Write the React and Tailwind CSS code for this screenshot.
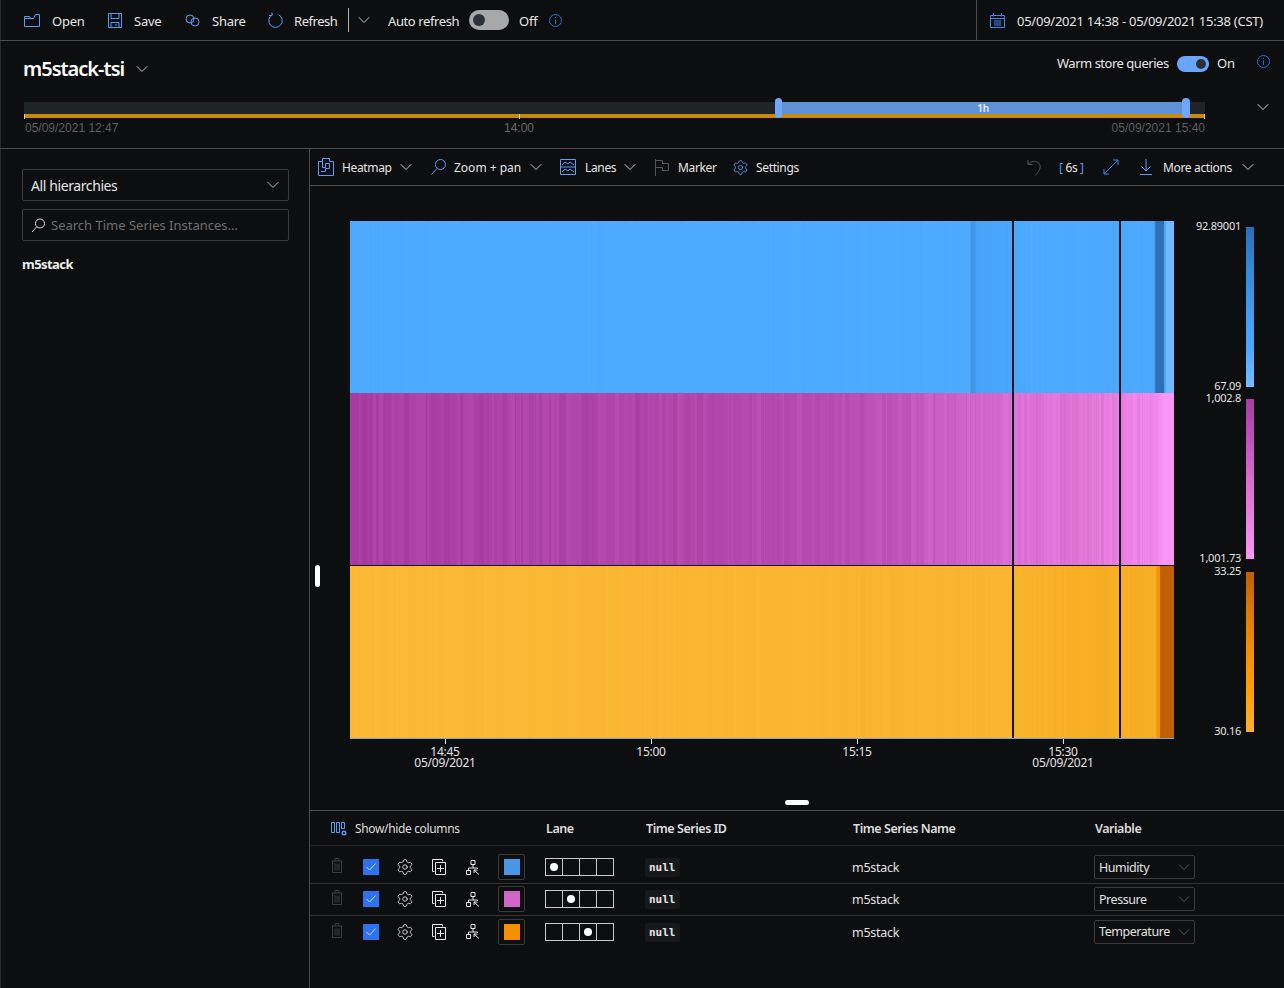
import React from 'react';
import { ChevronDown, Settings } from 'lucide-react';

// Colores usados en los iconos
const BLUE = '#5a9cf8';

function seeded(seed) {
  let s = seed;
  return () => {
    s = (s * 16807) % 2147483647;
    return s / 2147483647;
  };
}

function hexToRgb(h) {
  return [parseInt(h.slice(1, 3), 16), parseInt(h.slice(3, 5), 16), parseInt(h.slice(5, 7), 16)];
}

function colorAt(stops, x) {
  let i = 0;
  while (i < stops.length - 2 && x > stops[i + 1][0]) i++;
  const [x0, c0] = stops[i];
  const [x1, c1] = stops[i + 1];
  const t = Math.min(1, Math.max(0, (x - x0) / (x1 - x0)));
  const a = hexToRgb(c0);
  const b = hexToRgb(c1);
  return a.map((v, k) => v + (b[k] - v) * t);
}

function buildStripes(stops, noise, seed) {
  const rnd = seeded(seed);
  const out = [];
  let x = 350;
  while (x < 1174) {
    // cerca del final hay bandas finas, no se pueden tapar con franjas anchas
    const w = x >= 1140 || (x >= 965 && x < 980) ? 1 : x >= 965 ? 1 + Math.floor(rnd() * 3) : 1 + Math.floor(rnd() * 5);
    const n = (rnd() - 0.5) * noise;
    const fade = x > 1150 ? 0 : 1;
    const c = colorAt(stops, x + w / 2).map((v) => Math.round(Math.min(255, Math.max(0, v + n * fade))));
    out.push({ x, w, fill: `rgb(${c[0]},${c[1]},${c[2]})` });
    x += w;
  }
  return out;
}

const LANES = [
  {
    y: 221,
    h: 172,
    stripes: buildStripes(
      [
        [350, '#4daaff'], [970, '#4daaff'], [971, '#3f97e6'], [975, '#3f97e6'], [976, '#47a3f6'], [1000, '#49a6fa'],
        [1030, '#4daaff'], [1154, '#4ba8fc'], [1156, '#2b70b9'], [1163.9, '#2b70b9'], [1164, '#4aa8ff'],
        [1165.9, '#4aa8ff'], [1166, '#70b9ff'], [1174, '#70b9ff'],
      ],
      2,
      11
    ),
  },
  {
    y: 393,
    h: 172,
    stripes: buildStripes(
      [
        [350, '#a93fa3'], [700, '#b148aa'], [860, '#bb50b4'], [960, '#cc62c6'], [1010, '#d86dd2'], [1100, '#e27ad9'],
        [1122, '#e87ee2'], [1155, '#ef86ea'], [1164, '#fb95f8'], [1174, '#fb95f8'],
      ],
      12,
      29
    ),
  },
  {
    y: 566,
    h: 172,
    stripes: buildStripes(
      [
        [350, '#fbb935'], [1000, '#fab42f'], [1090, '#f8ae24'], [1156, '#f8ae24'], [1157, '#f59300'], [1159.9, '#f59300'],
        [1160, '#c06000'], [1174, '#c06000'],
      ],
      3,
      53
    ),
  },
];

const LEGENDS = [
  {
    id: 'lg-blue', y: 227, top: '92.89001', bottom: '67.09', topY: 230, bottomY: 390,
    stops: ['#2a6eb8', '#3488d8', '#3d9aec', '#4aa8ff', '#74bcff'],
  },
  {
    id: 'lg-purple', y: 399, top: '1,002.8', bottom: '1,001.73', topY: 402, bottomY: 562,
    stops: ['#a83da3', '#c050ba', '#d86cd2', '#ec80e6', '#fb95f8'],
  },
  {
    id: 'lg-orange', y: 572, top: '33.25', bottom: '30.16', topY: 575, bottomY: 735,
    stops: ['#c06000', '#dc7a00', '#f58e00', '#ffa000', '#fbb030'],
  },
];

const TICKS = [
  { x: 445, time: '14:45', date: '05/09/2021' },
  { x: 651, time: '15:00' },
  { x: 857, time: '15:15' },
  { x: 1063, time: '15:30', date: '05/09/2021' },
];

const ROWS = [
  { lane: 0, color: 'bg-[#4a96e6]', variable: 'Humidity' },
  { lane: 1, color: 'bg-[#d066c8]', variable: 'Pressure' },
  { lane: 2, color: 'bg-[#f78e00]', variable: 'Temperature' },
];

const Icon = ({ children, w = 16, h = 16, stroke = BLUE }) => (
  <svg width={w} height={h} viewBox={`0 0 ${w} ${h}`} fill="none" stroke={stroke} strokeWidth="1" className="shrink-0">
    {children}
  </svg>
);

const Info = () => (
  <Icon w={13} h={13} stroke="#2a72d0">
    <circle cx="6.5" cy="6.5" r="6" />
    <path d="M6.5 5.5v4.500M6.5 3v1" />
  </Icon>
);

// El glifo ocupa la mitad de la caja de lucide, por eso la caja es mas estrecha que el icono
const Chevron = ({ className = 'text-[#d8d8d8]' }) => (
  <span className={`shrink-0 w-[10px] flex justify-center ${className}`}>
    <ChevronDown size={20} strokeWidth={1.1} className="shrink-0" />
  </span>
);

const Toggle = ({ on }) =>
  on ? (
    <div className="flex w-8 h-4 rounded-full bg-[#69a6fb] items-center justify-end pr-[3px]">
      <div className="w-2.5 h-2.5 rounded-full bg-[#2c3138]" />
    </div>
  ) : (
    <div className="flex w-10 h-5 rounded-full bg-[#a8a8a8] items-center pl-1">
      <div className="w-3 h-3 rounded-full bg-[#2c3138]" />
    </div>
  );

function TopBar() {
  return (
    <div className="flex h-[41px] border-b border-[#4c4c4c] items-center text-[13px] text-[#e6e6e6]">
      <div className="ml-[24px]">
        <Icon w={16} h={13}>
          <path d="M.5 4.500h9l2-4h4v12H.5zM.5 4.500v-2h5l1 2" />
        </Icon>
      </div>
      <span className="ml-[12px] w-[56px] pt-[3px]">Open</span>
      <Icon w={14} h={15}>
        <path d="M.5.5h13v14H.5zM3 .5v5h8v-5M3 14.500v-5h8v5M8 11v2" />
      </Icon>
      <span className="ml-[12px] w-[51px] pt-[3px]">Save</span>
      <Icon w={15} h={13}>
        <circle cx="5" cy="5" r="4" />
        <circle cx="10" cy="8" r="4" />
      </Icon>
      <span className="ml-[12px] w-[56px] pt-[3px]">Share</span>
      <Icon w={15} h={17}>
        <path d="M4.500 2.700a6.700 6.700 0 1 0 6 0M4 .5v3h-3" />
      </Icon>
      <span className="ml-[11px] w-[43px] pt-[3px] whitespace-nowrap tracking-[-0.45px]">Refresh</span>
      <div className="ml-[11px] w-px h-6 bg-[#b4b4b4]" />
      <Chevron className="ml-[10px] text-[#d8d8d8]" />
      <span className="ml-[19px] w-[71px] pt-[3px] whitespace-nowrap tracking-[-0.4px]">Auto refresh</span>
      <div className="ml-[10px]"><Toggle /></div>
      <span className="ml-[10px] w-[17px] pt-[3px]">Off</span>
      <div className="ml-[13px]"><Info /></div>
      <div className="ml-auto w-px h-full bg-[#4c4c4c]" />
      <div className="ml-[13px]">
        <Icon w={15} h={15} stroke="#3e86f0">
          <path d="M.5 2.500h14v12H.5zM.5 5.500h14M3.500.5v3M11.500.5v3M4 8h7M4 10h7M4 12h7" />
        </Icon>
      </div>
      <span className="ml-[12px] mr-[20px] w-[247px] pt-[3px] whitespace-nowrap">05/09/2021 14:38 - 05/09/2021 15:38 (CST)</span>
    </div>
  );
}

function Brush() {
  return (
    <div className="relative ml-[24px] w-[1181px] h-[33px] mt-[11px]">
      <div className="h-3 bg-[#1f2426]" />
      <div className="h-1 bg-[#c98a0c]" />
      <div className="flex mt-[3px] pl-px text-[12px] leading-[14px] tracking-normal text-[#5e5e5e] font-['Liberation_Sans',sans-serif]">
        <span className="w-[479px]">05/09/2021 12:47</span>
        <span className="text-[#6a6a6a]">14:00</span>
        <span className="ml-auto">05/09/2021 15:40</span>
      </div>
      <div className="absolute left-0 top-[12px] w-px h-[5px] bg-[#d0d0d0]" />
      <div className="absolute left-[495px] top-[12px] w-px h-[5px] bg-[#d0d0d0]" />
      <div className="absolute right-0 top-[12px] w-px h-[5px] bg-[#d0d0d0]" />
      <div className="absolute left-[756px] top-0 w-[406px] h-3 bg-[#5f91d6] text-[10px] leading-3 text-center font-semibold text-[#e8eef8]">1h</div>
      <div className="absolute left-[751px] -top-1 w-[7px] h-5 rounded-full bg-[#6ea8fe]" />
      <div className="absolute left-[1158px] -top-1 w-[8px] h-5 rounded-full bg-[#6ea8fe]" />
    </div>
  );
}

function Header() {
  return (
    <div className="h-[108px] border-b border-[#4c4c4c]">
      <div className="flex h-[50px] items-start">
        <h1 className="ml-[23px] mt-[14px] text-[20px] w-[101px] leading-7 font-semibold text-white tracking-[-1px] whitespace-nowrap">m5stack-tsi</h1>
        <Chevron className="ml-[13px] mt-[18px] text-[#c8c8c8]" />
        <div className="ml-auto flex items-center mt-[13px] text-[13px] text-[#e6e6e6]">
          <span className="w-[112px] whitespace-nowrap tracking-[-0.48px]">Warm store queries</span>
          <div className="ml-[8px]"><Toggle on /></div>
          <span className="ml-[8px] w-[17px]">On</span>
          <div className="ml-[23px] mr-[14px] -mt-[4px]"><Info /></div>
        </div>
      </div>
      <div className="flex items-start">
        <Brush />
        <Chevron className="ml-[53px] mt-[6px] text-[#e0e0e0]" />
      </div>
    </div>
  );
}

function Sidebar() {
  return (
    <div className="w-[310px] shrink-0 border-r border-[#4c4c4c] pl-[22px] pr-[20px] pt-[20px]">
      <div className="flex h-8 items-center justify-between rounded-[2px] border border-[#3a3a3a] px-2 text-[14px] text-[#e6e6e6]">
        <span className="tracking-[-0.4px]">All hierarchies</span>
        <Chevron className="text-[#c8c8c8] mr-[2px]" />
      </div>
      <div className="flex h-8 items-center mt-2 rounded-[2px] border border-[#3a3a3a] px-2 text-[13px] text-[#6f6f6f]">
        <Icon w={14} h={15} stroke="#d8d8d8">
          <circle cx="9" cy="5.500" r="4.500" />
          <path d="M5.800 8.700L1 14" />
        </Icon>
        <span className="ml-[6px] pt-[2px] tracking-normal whitespace-nowrap">Search Time Series Instances...</span>
      </div>
      <div className="mt-[14px] text-[13px] font-bold text-[#eeeeee] tracking-[-0.55px]">m5stack</div>
    </div>
  );
}

function ToolItem({ icon, label, chevron, gap = 'ml-[8px]', end, width }) {
  return (
    <div className={`flex items-center ${end}`}>
      {icon}
      <span className={`${gap} ${width} pt-[2px] whitespace-nowrap`}>{label}</span>
      {chevron && <Chevron className="ml-[10px] text-[#d8d8d8]" />}
    </div>
  );
}

function Toolbar() {
  return (
    <div className="flex h-[37px] border-b border-[#4c4c4c] items-center text-[12px] tracking-[-0.35px] text-[#e6e6e6] pl-[8px] pr-[31px]">
      <ToolItem
        end="mr-[20px]"
        width="w-[49px]"
        chevron
        icon={
          <Icon w={16} h={18}>
            <path d="M.5 3.500h4v-3h7v3h4v14H.5zM4.500 3.500v6h3v-4h4v5h-4v3H3" />
          </Icon>
        }
        label="Heatmap"
      />
      <ToolItem
        end="mr-[19px]"
        width="w-[67px] tracking-normal"
        chevron
        icon={
          <Icon w={15} h={16}>
            <circle cx="9.500" cy="5.500" r="5" />
            <path d="M6 9.500L.5 15.500" />
          </Icon>
        }
        label="Zoom + pan"
      />
      <ToolItem
        end="mr-[20px]"
        width="w-[30px]"
        chevron
        gap="ml-[9px]"
        icon={
          <Icon w={16} h={16}>
            <path d="M.5.5h15v15H.5zM.5 8h15M2 6l3-3 3 2 2-2 4 3M2 13l3-3 3 2 2-2 4 3" />
          </Icon>
        }
        label="Lanes"
      />
      <ToolItem
        end="mr-[16px]"
        width="w-[38px]"
        gap="ml-[9px]"
        icon={
          <Icon w={14} h={17} stroke="#555555">
            <path d="M.5 0v17M.5 1.500h7v3h6v7h-6v-3h-7" />
          </Icon>
        }
        label="Marker"
      />
      <ToolItem
        gap="ml-[7px]"
        width="w-[44px]"
        icon={<Settings size={17} strokeWidth={1.2} color={BLUE} className="shrink-0" />}
        label="Settings"
      />
      <div className="ml-auto flex items-center">
        <Icon w={15} h={17} stroke="#555555">
          <path d="M1 1v4.500h4.500M1 5.500C4 2 8 1.500 11 3.500c3.500 2.500 3 7.500-3 13" />
        </Icon>
        <span className="ml-[17px] w-[27px] pt-[2px] whitespace-nowrap"><span className="text-[#5a9cf8]">[</span> 6s <span className="text-[#5a9cf8]">]</span></span>
        <div className="ml-[17px]">
          <Icon w={16} h={16} stroke="#3e86f0">
            <path d="M1 15L15 1M10 1h5v5M1 10v5h5" />
          </Icon>
        </div>
        <div className="ml-[21px]">
          <Icon w={12} h={16}>
            <path d="M6 0v12M1.500 7.500L6 12l4.500-4.500M0 15.500h12" />
          </Icon>
        </div>
        <span className="ml-[11px] w-[69px] pt-[2px] whitespace-nowrap">More actions</span>
        <Chevron className="ml-[11px] text-[#e0e0e0]" />
      </div>
    </div>
  );
}

// Todo el grafico va en un unico svg, en coordenadas de pagina
function Chart() {
  return (
    <div className="relative flex-1">
      <svg width="974" height="624" viewBox="310 186 974 624" className="block">
        <defs>
          {LEGENDS.map((l) => (
            <linearGradient key={l.id} id={l.id} x1="0" y1="0" x2="0" y2="1">
              {l.stops.map((c, i) => (
                <stop key={c} offset={i / (l.stops.length - 1)} stopColor={c} />
              ))}
            </linearGradient>
          ))}
        </defs>
        {LANES.map((lane) =>
          lane.stripes.map((s) => (
            <rect key={`${lane.y}-${s.x}`} x={s.x} y={lane.y} width={s.w} height={lane.h} fill={s.fill} shapeRendering="crispEdges" />
          ))
        )}
        <rect x="350" y="565" width="824" height="1" fill="#1a0f1c" />
        <rect x="1012" y="221" width="2" height="517" fill="#14151a" />
        <rect x="1119" y="221" width="2" height="517" fill="#14151a" />
        <rect x="350" y="738" width="824" height="1" fill="#7aa7d8" />
        {TICKS.map((t) => (
          <g key={t.x} fill="#e4e4e4" fontSize="12" textAnchor="middle">
            <rect x={t.x} y="739" width="1" height="5" fill="#e8e8e8" />
            <text x={t.x} y="756">{t.time}</text>
            {t.date && <text x={t.x} y="767">{t.date}</text>}
          </g>
        ))}
        {LEGENDS.map((l) => (
          <g key={l.id} fill="#e4e4e4" fontSize="11" textAnchor="end">
            <rect x="1246" y={l.y} width="8" height="160" fill={`url(#${l.id})`} />
            <text x="1241" y={l.topY}>{l.top}</text>
            <text x="1241" y={l.bottomY}>{l.bottom}</text>
          </g>
        ))}
      </svg>
      <div className="absolute left-[5px] top-[379px] w-[5px] h-[22px] rounded-full bg-white" />
      <div className="absolute left-[475px] bottom-[5px] w-6 h-[5px] rounded-full bg-white" />
    </div>
  );
}

function Trash() {
  return (
    <Icon w={12} h={15} stroke="#3c3c3c">
      <path d="M.5 3h11M4 3V.5h4V3M1.500 3v11.500h9V3M4 5.500v7M6 5.500v7M8 5.500v7" />
    </Icon>
  );
}

function Copy() {
  return (
    <Icon w={14} h={16} stroke="#ececec">
      <path d="M10.500 2.500V.5H.5v12h2M3.500 3.500h10v12h-10zM8.500 6v7M5 9.500h7" />
    </Icon>
  );
}

function Hierarchy() {
  return (
    <Icon w={14} h={15} stroke="#ececec">
      <path d="M5 .5h4v4H5zM.5 10.500h4v4h-4zM7 4.500V8M2.500 10.500V8h9v1M8 10l5 4.500M8 10h3.500M8 10v3" />
    </Icon>
  );
}

function Check() {
  return (
    <div className="flex w-4 h-4 items-center justify-center bg-[#2e72f0]">
      <svg width="10" height="8" viewBox="0 0 10 8" fill="none" stroke="#cfe0ff" strokeWidth="1">
        <path d="M.5 4l3 3 6-6.500" />
      </svg>
    </div>
  );
}

function LanePicker({ active }) {
  return (
    <div className="flex w-[69px] h-[18px] border border-[#c8c8c8] divide-x divide-[#c8c8c8]">
      {[0, 1, 2, 3].map((i) => (
        <div key={i} className="flex flex-1 items-center justify-center">
          {i === active && <div className="w-2 h-2 rounded-full bg-white" />}
        </div>
      ))}
    </div>
  );
}

function Row({ row, last }) {
  return (
    <div className={`flex h-8 pb-px items-center text-[#e2e2e2] text-[12.500px] ${last ? '' : 'border-b border-[#333333]'}`}>
      <div className="w-[53px] pl-[21px] -mt-[3px]"><Trash /></div>
      <div className="w-[34px]"><Check /></div>
      <div className="w-[35px]"><Settings size={18} strokeWidth={1.2} color="#d8d8d8" className="shrink-0 -ml-px" /></div>
      <div className="w-[34px]"><Copy /></div>
      <div className="w-[32px]"><Hierarchy /></div>
      <div className="w-[47px]">
        <div className="flex w-[27px] h-[26px] items-center justify-center rounded-[2px] border border-[#3a3a3a]">
          <div className={`w-4 h-4 ${row.color}`} />
        </div>
      </div>
      <div className="w-[100px]"><LanePicker active={row.lane} /></div>
      <div className="w-[207px]">
        <span className="inline-block px-[4px] py-[2px] mt-px rounded-[2px] bg-[#18191c] font-['DejaVu_Sans_Mono',monospace] text-[11px] leading-[15px] tracking-normal font-semibold text-[#e4e4e4]">null</span>
      </div>
      <div className="w-[242px] pt-[3px]">m5stack</div>
      <div className="flex w-[101px] h-6 items-center justify-between rounded-[2px] border border-[#3a3a3a] pl-[4px] pr-[5px]">
        <span className="pt-[2px] tracking-[-0.45px] whitespace-nowrap">{row.variable}</span>
        <Chevron className="text-[#555555]" />
      </div>
    </div>
  );
}

function SeriesTable() {
  return (
    <div className="border-t border-[#4c4c4c] h-[178px]">
      <div className="flex h-[35px] items-center border-b border-[#232426] text-[12.500px] text-[#dedede] tracking-[-0.45px]">
        <div className="flex w-[236px] items-center pl-[21px]">
          <Icon w={16} h={15} stroke="#5a9cf8">
            <path d="M.5 1.500h3v10h-3zM5.500 1.500h3v10h-3zM10.500 1.500h3v6h-3z" />
            <circle cx="13" cy="12" r="1.800" strokeWidth="1.400" />
          </Icon>
          <span className="ml-[8px] pt-[2px] text-[12px] tracking-[-0.35px] whitespace-nowrap">Show/hide columns</span>
        </div>
        <div className="w-[100px] pt-[2px] font-semibold">Lane</div>
        <div className="w-[207px] pt-[2px] font-semibold">Time Series ID</div>
        <div className="w-[242px] pt-[2px] font-semibold">Time Series Name</div>
        <div className="pt-[2px] font-semibold">Variable</div>
      </div>
      <div className="pt-[6px]">
        {ROWS.map((r, i) => (
          <Row key={r.variable} row={r} last={i === ROWS.length - 1} />
        ))}
      </div>
    </div>
  );
}

export default function App() {
  return (
    <div className="w-[1284px] h-[988px] overflow-hidden bg-[#0d0e10] shadow-[inset_1px_0_0_#2a2a2a] font-['Noto_Sans',sans-serif] tracking-[-0.25px]">
      <TopBar />
      <Header />
      <div className="flex h-[839px]">
        <Sidebar />
        <div className="flex flex-col flex-1 min-w-0">
          <Toolbar />
          <Chart />
          <SeriesTable />
        </div>
      </div>
    </div>
  );
}
